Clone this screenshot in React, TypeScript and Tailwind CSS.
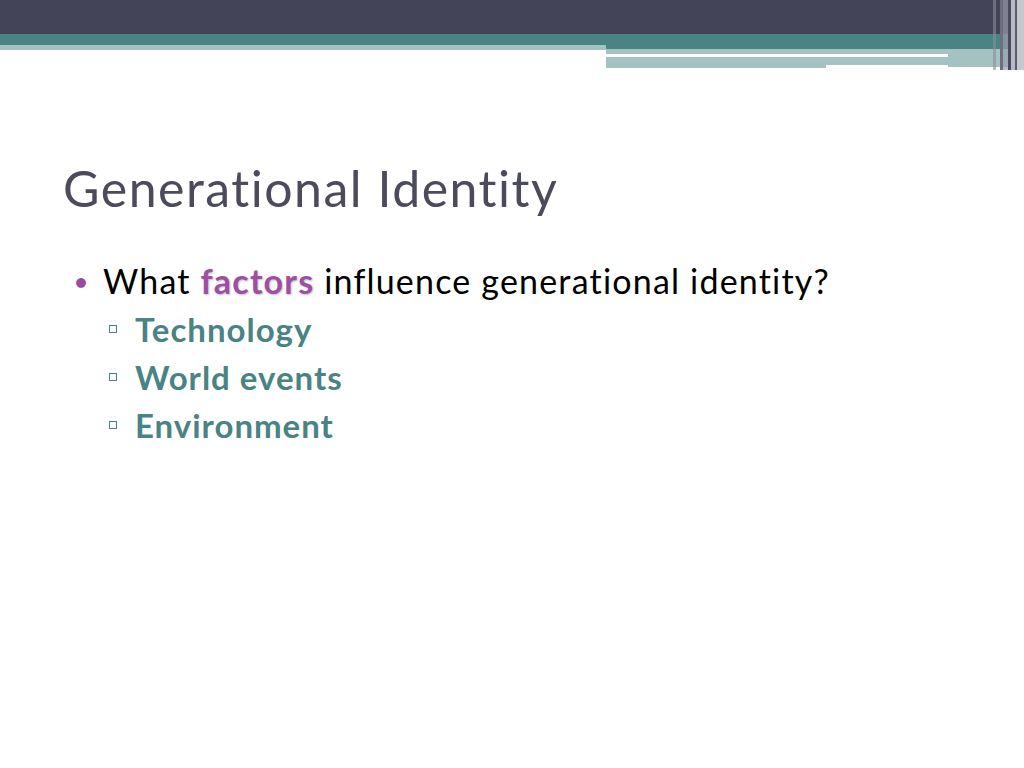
export default function App() {
  return (
    <div className="w-[1024px] h-[768px] bg-white relative overflow-hidden" style={{ fontFamily: "Lato, 'Open Sans', sans-serif", fontVariantLigatures: "none" }}>
      <div className="h-[34px] bg-[#434457]" />
      <div className="flex h-[34px]">
        <div className="w-[606px] flex flex-col">
          <div className="h-[11px] bg-[#4a8384]" />
          <div className="h-[5px] bg-[#a5c2c3]" />
        </div>
        <div className="flex-1 flex flex-col">
          <div className="h-[16px] bg-[#4a8384]" />
          <div className="flex">
            <div className="w-[342px] flex flex-col">
              <div className="h-[5px] bg-[#a5c2c3]" />
              <div className="h-[3px] bg-white" />
              <div className="flex">
                <div className="w-[220px] h-[11px] bg-[#a5c2c3]" />
                <div className="flex-1 h-[8px] bg-[#a5c2c3]" />
              </div>
            </div>
            <div className="flex-1 h-[18px] bg-[#a5c2c3]" />
          </div>
        </div>
      </div>
      <div className="absolute top-0 right-0 h-[70px] w-[31px] flex">
        <div className="w-[3px] bg-[#8a8c9a] opacity-60" />
        <div className="w-[4px]" />
        <div className="w-[3px] bg-[#6d6f80]" />
        <div className="w-[5px] bg-[#9a9cab] opacity-70" />
        <div className="w-[3px] bg-[#4a4b5e]" />
        <div className="w-[4px] bg-[#b8bac4]" />
        <div className="w-[2px] bg-[#5b5d6e]" />
        <div className="w-[7px] bg-[#c6c7d0]" />
      </div>
      <div className="pl-[63px] pt-[90px]">
        <h1 className="text-[50px] leading-[60px] tracking-[0.03em] text-[#4b4b5c]">Generational Identity</h1>
        <div className="mt-[42px] flex items-center text-[34px] leading-[42px] tracking-[0.035em] text-black">
          <span className="text-[#9a4a9e] text-[20px] w-[40px] pl-[12px]">●</span>
          <span>What <span className="font-bold text-[#9f4fa3]" style={{ textShadow: "1px 1px 2px rgba(0,0,0,0.25)" }}>factors</span> influence generational identity?</span>
        </div>
        <div className="pl-[46px] mt-[6px] flex flex-col gap-[6px]">
          {["Technology", "World events", "Environment"].map((t) => (
            <div key={t} className="flex items-center text-[33px] leading-[42px] tracking-[0.03em] font-bold text-[#4a8384]">
              <span className="w-[8px] h-[8px] border border-[#4a8384] mr-[18px]" />
              {t}
            </div>
          ))}
        </div>
      </div>
    </div>
  );
}
